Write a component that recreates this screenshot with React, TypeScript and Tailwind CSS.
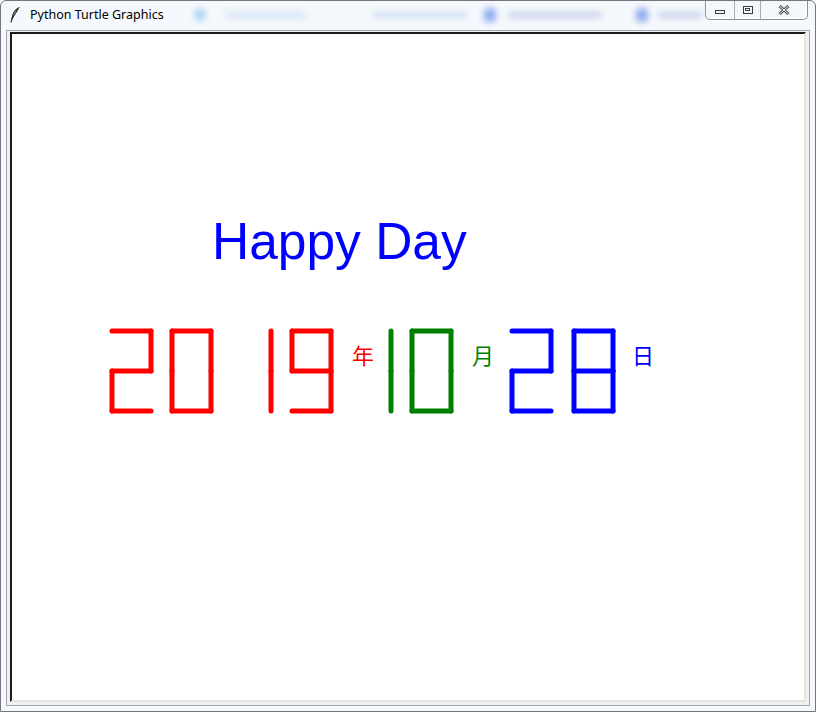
const RED = '#ff0000'
const GREEN = '#008000'
const BLUE = '#0000ff'

// seven-segment digits, turtle style: segment ends at cell corners
const T = 331
const M = 371
const B = 411
const W = 39

type Seg = 'a' | 'b' | 'c' | 'd' | 'e' | 'f' | 'g'

const DIGITS: Record<string, Seg[]> = {
  '0': ['a', 'b', 'c', 'd', 'e', 'f'],
  '1': ['b', 'c'],
  '2': ['a', 'b', 'g', 'e', 'd'],
  '8': ['a', 'b', 'c', 'd', 'e', 'f', 'g'],
  '9': ['a', 'b', 'c', 'd', 'f', 'g'],
}

function segLine(s: Seg, l: number): [number, number, number, number] {
  const r = l + W
  switch (s) {
    case 'a':
      return [l, T, r, T]
    case 'b':
      return [r, T, r, M]
    case 'c':
      return [r, M, r, B]
    case 'd':
      return [l, B, r, B]
    case 'e':
      return [l, M, l, B]
    case 'f':
      return [l, T, l, M]
    default:
      return [l, M, r, M]
  }
}

function Digit({ d, x, color }: { d: string; x: number; color: string }) {
  return (
    <g stroke={color} strokeWidth={5} strokeLinecap="round">
      {DIGITS[d].map((s) => {
        const [x1, y1, x2, y2] = segLine(s, x)
        return <line key={s} x1={x1} y1={y1} x2={x2} y2={y2} />
      })}
    </g>
  )
}

const digits = [
  { d: '2', x: 112, color: RED },
  { d: '0', x: 172, color: RED },
  { d: '1', x: 232, color: RED },
  { d: '9', x: 292, color: RED },
  { d: '1', x: 352, color: GREEN },
  { d: '0', x: 412, color: GREEN },
  { d: '2', x: 512, color: BLUE },
  { d: '8', x: 574, color: BLUE },
]

const cjk = "'Noto Sans CJK SC', sans-serif"

function WindowButtons() {
  return (
    <div className="ml-auto mr-[7px] -mt-[1px] flex h-[20px] self-start rounded-b-[5px] border border-t-0 border-[#8b8f96] bg-[#f4f7fb]/80 shadow-[inset_0_0_0_1px_rgba(255,255,255,0.8)]">
      <div className="flex w-[29px] items-center justify-center border-r border-[#a7abb2]">
        <div className="mt-[4px] h-[4px] w-[10px] border border-[#3c3c3c]" />
      </div>
      <div className="flex w-[26px] items-center justify-center border-r border-[#a7abb2]">
        <div className="flex h-[8px] w-[10px] items-center justify-center border border-[#3c3c3c]">
          <div className="h-[3px] w-[5px] border border-[#3c3c3c]" />
        </div>
      </div>
      <div className="flex w-[46px] items-center justify-center">
        <svg width="12" height="10" viewBox="0 0 12 10">
          <path d="M1.5 1 L10.5 9 M10.5 1 L1.5 9" stroke="#4a4a4a" strokeWidth="3" />
          <path d="M1.5 1 L10.5 9 M10.5 1 L1.5 9" stroke="#ffffff" strokeWidth="1" />
        </svg>
      </div>
    </div>
  )
}

function Feather() {
  return (
    <svg width="10" height="16" viewBox="0 0 10 16" className="shrink-0">
      <path d="M8.5 1 C5 3 2.5 7 2 12 C3.5 9 6.5 5 8.5 1 Z" fill="none" stroke="#222" strokeWidth="1.1" />
      <path d="M2.2 11 L1 15" stroke="#222" strokeWidth="1.1" strokeLinecap="round" />
    </svg>
  )
}

// blurred desktop seen through the glass title bar
function GlassBlur() {
  return (
    <div className="pointer-events-none flex items-center">
      <div className="ml-[30px] h-[12px] w-[12px] rounded-full bg-[#a9d2f4] blur-[3px]" />
      <div className="ml-[20px] h-[6px] w-[80px] rounded bg-[#d3e3f6] blur-[3px]" />
      <div className="ml-[66px] h-[6px] w-[96px] rounded bg-[#cfe0f6] blur-[3px]" />
      <div className="ml-[16px] h-[14px] w-[12px] rounded bg-[#90acf0] blur-[3px]" />
      <div className="ml-[12px] h-[6px] w-[94px] rounded bg-[#c6d1ea] blur-[3px]" />
      <div className="ml-[34px] h-[14px] w-[12px] rounded bg-[#90acf0] blur-[3px]" />
      <div className="ml-[10px] h-[6px] w-[44px] rounded bg-[#c6d1ea] blur-[3px]" />
    </div>
  )
}

export default function App() {
  return (
    <div className="flex h-[712px] w-[816px] flex-col overflow-hidden rounded-t-[6px] border border-[#74787e] bg-[#f5f8fc]">
      <div className="flex h-[29px] shrink-0 items-center pl-[9px] pb-[1px]">
        <Feather />
        <span className="ml-[10px] text-[12.5px] leading-none text-black font-['Noto_Sans',sans-serif]">
          Python Turtle Graphics
        </span>
        <GlassBlur />
        <WindowButtons />
      </div>

      <div className="mx-[5px] mb-[5px] flex flex-1 border border-[#a3a8b0] bg-[#f0f0f0] px-[3px] pt-[1px] pb-[3px]">
        <div className="flex-1 border-2 border-t-[#1a1a1a] border-l-[#1a1a1a] border-b-[#e4e4e4] border-r-[#e4e4e4] bg-white">
          <svg className="block h-full w-full" viewBox="12 34 792 666">
            <text
              x={212}
              y={259}
              fill={BLUE}
              fontSize={51.5}
              fontFamily="'Liberation Sans', Arial, sans-serif"
            >
              Happy Day
            </text>
            {digits.map((g, i) => (
              <Digit key={i} d={g.d} x={g.x} color={g.color} />
            ))}
            <text x={352} y={364} fill={RED} fontSize={22} fontFamily={cjk}>
              年
            </text>
            <text x={472} y={364} fill={GREEN} fontSize={22} fontFamily={cjk}>
              月
            </text>
            <text x={632} y={364} fill={BLUE} fontSize={22} fontFamily={cjk}>
              日
            </text>
          </svg>
        </div>
      </div>
    </div>
  )
}
